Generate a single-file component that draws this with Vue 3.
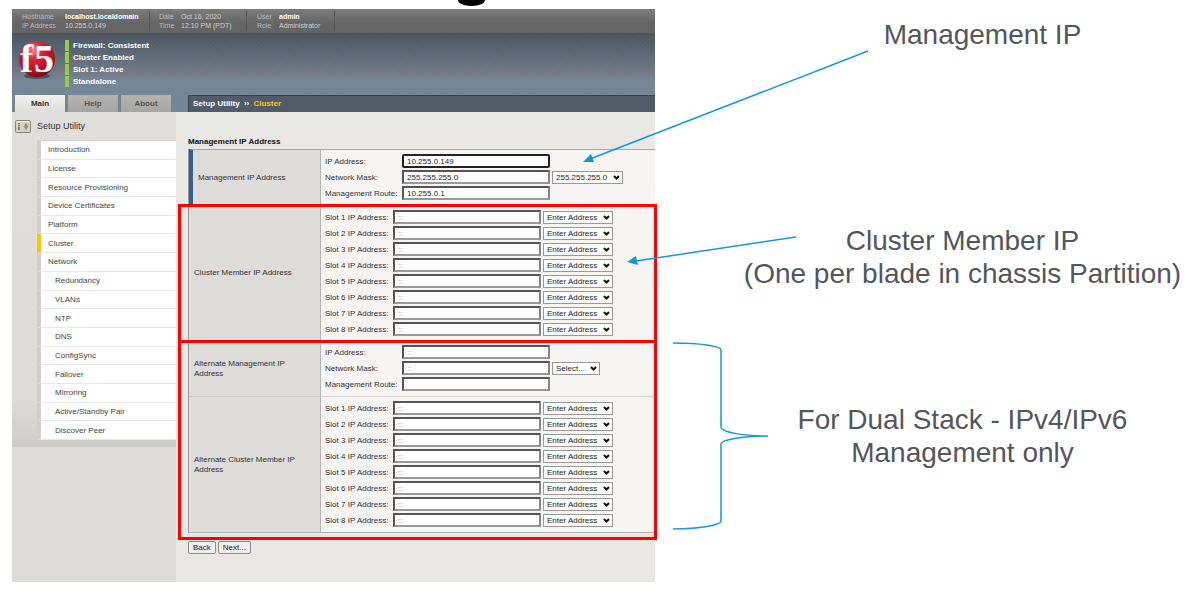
<script setup>
const hostInfo = [
  { cls: 'host', rows: [['Hostname', 'localhost.localdomain', true], ['IP Address', '10.255.0.149', false]] },
  { cls: 'time', rows: [['Date', 'Oct 16, 2020', false], ['Time', '12:10 PM (PDT)', false]] },
  { cls: 'user', rows: [['User', 'admin', true], ['Role', 'Administrator', false]] },
]

const statuses = ['Firewall: Consistent', 'Cluster Enabled', 'Slot 1: Active', 'Standalone']

const menu = [
  { label: 'Introduction' },
  { label: 'License' },
  { label: 'Resource Provisioning' },
  { label: 'Device Certificates' },
  { label: 'Platform' },
  { label: 'Cluster', active: true },
  { label: 'Network' },
  { label: 'Redundancy', sub: true },
  { label: 'VLANs', sub: true },
  { label: 'NTP', sub: true },
  { label: 'DNS', sub: true },
  { label: 'ConfigSync', sub: true },
  { label: 'Failover', sub: true },
  { label: 'Mirroring', sub: true },
  { label: 'Active/Standby Pair', sub: true },
  { label: 'Discover Peer', sub: true },
]

const slots = (prefix) =>
  Array.from({ length: 8 }, (_, i) => ({
    id: `${prefix}-slot-${i + 1}`,
    label: `Slot ${i + 1} IP Address:`,
    value: '::',
    select: 'Enter Address',
  }))

const groups = [
  {
    boxed: false,
    sections: [
      {
        title: 'Management IP Address',
        required: true,
        wide: true,
        fields: [
          { id: 'mgmt-ip', label: 'IP Address:', value: '10.255.0.149', focus: true },
          { id: 'mgmt-mask', label: 'Network Mask:', value: '255.255.255.0', select: '255.255.255.0' },
          { id: 'mgmt-route', label: 'Management Route:', value: '10.255.0.1' },
        ],
      },
    ],
  },
  {
    boxed: true,
    sections: [{ title: 'Cluster Member IP Address', fields: slots('member') }],
  },
  {
    boxed: true,
    last: true,
    sections: [
      {
        title: 'Alternate Management IP Address',
        wide: true,
        fields: [
          { id: 'alt-ip', label: 'IP Address:', value: '::' },
          { id: 'alt-mask', label: 'Network Mask:', value: '::', select: 'Select...' },
          { id: 'alt-route', label: 'Management Route:', value: '' },
        ],
      },
      { title: 'Alternate Cluster Member IP Address', fields: slots('alt-member') },
    ],
  },
]
</script>

<template>
  <div class="slide">
    <div class="slide-top"><span class="title-tail"></span></div>

    <div class="columns">
      <div class="console">
        <header class="info-bar">
          <dl v-for="g in hostInfo" :key="g.cls" :class="['info', g.cls]">
            <template v-for="r in g.rows" :key="r[0]">
              <dt>{{ r[0] }}</dt>
              <dd :class="{ strong: r[2] }">{{ r[1] }}</dd>
            </template>
          </dl>
        </header>

        <div class="banner">
          <svg class="logo" viewBox="0 0 38 38" role="img" aria-label="f5">
            <defs>
              <radialGradient id="ball" cx="40%" cy="25%" r="75%">
                <stop offset="0" stop-color="#f0848c" />
                <stop offset="0.35" stop-color="#d92435" />
                <stop offset="0.8" stop-color="#b50d22" />
                <stop offset="1" stop-color="#7d0a18" />
              </radialGradient>
            </defs>
            <ellipse cx="19" cy="35" rx="13" ry="3" fill="#2c3640" opacity="0.6" />
            <circle cx="19" cy="18" r="18" fill="url(#ball)" />
            <text x="2" y="31" class="logo-letter">f</text>
            <text x="16" y="31" class="logo-letter">5</text>
          </svg>
          <ul class="statuses">
            <li v-for="s in statuses" :key="s">{{ s }}</li>
          </ul>
        </div>

        <div class="tab-row">
          <nav class="tabs">
            <button type="button" class="tab current">Main</button>
            <button type="button" class="tab">Help</button>
            <button type="button" class="tab">About</button>
          </nav>
          <div class="crumbs">Setup Utility <span class="sep">››</span> <span class="here">Cluster</span></div>
        </div>

        <div class="body">
          <aside class="sidebar">
            <div class="side-panel">
              <h2 class="side-title">
                <svg class="switches" viewBox="0 0 16 13" aria-hidden="true">
                  <rect x="0.5" y="0.5" width="15" height="12" rx="1" fill="#d2d1cc" stroke="#85847f" />
                  <path d="M1.5 1.5h13" stroke="#f4f3f0" />
                  <path d="M4 3v7M11 3v7" stroke="#99988f" />
                  <path d="M3 3h2v3H3zM3 7h2v3H3z" fill="#85847a" />
                  <path d="M3 4h2v1H3z" fill="#d8bd45" />
                  <path d="M8.500 6.500l2.500-3 2.500 3-2.500 3z" fill="#a39b48" />
                </svg>
                Setup Utility
              </h2>
              <ul class="menu">
                <li v-for="m in menu" :key="m.label" :class="{ sub: m.sub, active: m.active }">
                  <a href="#">{{ m.label }}</a>
                </li>
              </ul>
            </div>
          </aside>

          <main class="content">
            <h1>Management IP Address</h1>
            <table class="form">
              <tbody v-for="(g, gi) in groups" :key="gi" :class="{ boxed: g.boxed, last: g.last }">
                <tr v-for="s in g.sections" :key="s.title">
                  <th scope="row" :class="{ required: s.required }">{{ s.title }}</th>
                  <td>
                    <div v-for="f in s.fields" :key="f.id" :class="['field', { wide: s.wide }]">
                      <label :for="f.id">{{ f.label }}</label>
                      <input :id="f.id" type="text" :value="f.value" :class="{ focus: f.focus, blank: f.value === '::' }" />
                      <span v-if="f.select" class="picker">
                        <select :aria-label="f.label + ' preset'">
                          <option>{{ f.select }}</option>
                        </select>
                        <svg viewBox="0 0 7 5" aria-hidden="true"><path d="M1 1l2.500 2.500L6 1" /></svg>
                      </span>
                    </div>
                  </td>
                </tr>
              </tbody>
            </table>
            <div class="actions">
              <button type="button">Back</button>
              <button type="button">Next...</button>
            </div>
          </main>
        </div>
      </div>

      <div class="notes">
        <p class="first">Management IP</p>
        <p class="second">Cluster Member IP<br />(One per blade in chassis Partition)</p>
        <p class="third">For Dual Stack - IPv4/IPv6<br />Management only</p>
      </div>
    </div>

    <svg class="pointers" viewBox="0 0 1198 597" preserveAspectRatio="none" aria-hidden="true">
      <path class="line" d="M868 51L590 159" />
      <path class="head" d="M583 162l8-8 3 8z" />
      <path class="line" d="M796 237L636 261" />
      <path class="head" d="M627 262l9-6 2 9z" />
      <path class="line" d="M673 343C700 343 721 346 721 350V427C721 432 742 436 768 436C742 436 721 440 721 444V521C721 525 700 529 673 529" />
    </svg>
  </div>
</template>

<style>
body {
  margin: 0;
  background: #fff;
}
</style>

<style scoped>
.slide {
  position: relative;
  min-height: 597px;
  font-family: "Liberation Sans", Arial, sans-serif;
  font-size: 8px;
  color: #333;
}
.slide * {
  box-sizing: border-box;
}
.slide-top {
  height: 9px;
  padding-left: 458px;
}
.title-tail {
  display: block;
  width: 27px;
  height: 6px;
  border-radius: 0 0 13px 13px / 0 0 6px 6px;
  background: #000;
}
.columns {
  display: grid;
  grid-template-columns: 643fr 543fr;
  padding-left: 12px;
}

/* console header */
.info-bar {
  display: flex;
  height: 26px;
  padding: 2px 0;
  background: linear-gradient(#7c7c7c, #656565 60%, #646464);
  border-bottom: 2px solid #505254;
}
.info {
  display: grid;
  align-content: center;
  margin: 0;
  border-right: 1px solid #555;
  font-size: 7px;
  line-height: 9px;
  color: #bdbdbd;
}
.info.host {
  grid-template-columns: 43px 84px;
  padding-left: 10px;
}
.info.time {
  grid-template-columns: 22px 65px;
  padding-left: 9px;
}
.info.user {
  grid-template-columns: 22px 55px;
  padding-left: 10px;
}
.info dd {
  margin: 0;
  color: #d0d0d0;
}
.info dd.strong {
  font-weight: 700;
  color: #fff;
}
.banner {
  display: flex;
  height: 60px;
  padding: 5px 0 0 6px;
  gap: 9px;
  background:
    repeating-linear-gradient(135deg, rgba(255, 255, 255, 0.02) 0 1px, transparent 1px 3px),
    linear-gradient(#4b5762, #5b6774 30%, #727c89 65%, #748596 75%, #748596);
}
.logo {
  width: 38px;
  height: 38px;
  margin-top: 1px;
  overflow: visible;
}
.logo-letter {
  font-family: "Liberation Serif", "Times New Roman", serif;
  font-size: 40px;
  font-weight: 700;
  fill: #fff;
}
.statuses {
  margin: 0;
  padding: 0;
  list-style: none;
  font-weight: 700;
  line-height: 11px;
  color: #fff;
}
.statuses li {
  margin-bottom: 1px;
  padding-left: 4px;
  border-left: 4px solid #97cc49;
}
.tab-row {
  display: grid;
  grid-template-columns: 176px 1fr;
  height: 17px;
  background: #748596;
}
.tabs {
  display: flex;
  gap: 3px;
  padding-left: 3px;
}
.tab {
  width: 50px;
  padding: 0;
  border: 0;
  background: linear-gradient(#b4b3af, #a5a4a0);
  font: 700 8px/17px "Liberation Sans", Arial, sans-serif;
  color: #55554f;
}
.tab.current {
  background: linear-gradient(#f2f1ee, #dedddA);
  color: #333;
}
.crumbs {
  padding-left: 4px;
  border-top: 1px solid #3d4650;
  border-left: 1px solid #3d4650;
  background: #515c69;
  font-weight: 700;
  line-height: 16px;
  color: #fff;
}
.crumbs .sep {
  padding: 0 2px;
}
.crumbs .here {
  color: #fdc500;
}

/* body */
.body {
  display: grid;
  grid-template-columns: 164px 1fr;
  min-height: 470px;
  background: #e9e8e4;
}
.sidebar {
  background: #dddcd8;
}
.side-panel {
  padding-bottom: 7px;
  background: linear-gradient(#dfdeda, #dddcd8 85%, #cdccc8);
}
.side-title {
  display: flex;
  align-items: center;
  gap: 6px;
  height: 28px;
  margin: 0;
  padding-left: 3px;
  font-size: 9px;
  font-weight: 400;
}
.switches {
  width: 16px;
  height: 13px;
}
.menu {
  display: grid;
  grid-auto-rows: 1fr;
  height: 300px;
  margin: 0 0 0 25px;
  padding: 0;
  list-style: none;
  border-top: 1px solid #cfceca;
}
.menu li {
  display: flex;
  align-items: center;
  padding-left: 7px;
  border-left: 4px solid #cfceca;
  border-bottom: 1px solid #e8e7e4;
  background: #fff;
}
.menu li.sub {
  padding-left: 14px;
}
.menu li.active {
  border-left-color: #fdc500;
}
.menu a {
  color: #444;
  text-decoration: none;
}
.content {
  padding: 25px 0 0 12px;
}
h1 {
  margin: 0;
  font-size: 8px;
  line-height: 10px;
  color: #111;
}
.form {
  width: 100%;
  margin-top: 2px;
  border-collapse: separate;
  border-spacing: 0;
  border-left: 1px solid #999;
}
tbody {
  position: relative;
}
tbody.boxed::after {
  content: "";
  position: absolute;
  inset: -1px -2px -3px -11px;
  border: 3px solid #f00;
  pointer-events: none;
}
tbody.boxed.last::after {
  top: 0;
  bottom: -7px;
}
th {
  width: 132px;
  padding: 0 8px 0 5px;
  border-right: 1px solid #b5b4b0;
  border-top: 1px solid #cccbc7;
  background: #dddcd8;
  font-weight: 400;
  line-height: 10px;
  text-align: left;
}
th.required {
  border-left: 4px solid #2f6398;
}
td {
  padding: 3px 4px 4px;
  border-top: 1px solid #d5d4d1;
  background: #f6f5f4;
}
tbody.boxed:not(.last) td {
  padding-bottom: 3px;
}
tbody:last-child tr:last-child > * {
  border-bottom: 1px solid #b5b4b0;
}
tbody:first-child tr > * {
  border-top-color: #aaa;
}
.field {
  display: flex;
  align-items: center;
  gap: 2px;
  height: 16px;
}
.field label {
  width: 66px;
  white-space: nowrap;
}
.field.wide label {
  width: 75px;
}
input {
  width: 148px;
  height: 14px;
  padding: 0 3px;
  border: 2px solid;
  border-color: #555 #858585 #999 #555;
  background: #fff;
  font: 8px "Liberation Sans", Arial, sans-serif;
  color: #222;
}
input.blank {
  color: #8a8078;
}
input.focus {
  border-color: #222;
  border-radius: 2px;
}
.picker {
  position: relative;
}
.picker select {
  display: block;
  height: 13px;
  padding: 0 14px 0 3px;
  border: 1px solid #999;
  border-radius: 0;
  background: #fff;
  appearance: none;
  font: 8px "Liberation Sans", Arial, sans-serif;
  color: #222;
}
.picker svg {
  position: absolute;
  right: 3px;
  top: 4px;
  width: 7px;
  height: 5px;
  fill: none;
  stroke: #111;
  stroke-width: 2;
  pointer-events: none;
}
.actions {
  display: flex;
  gap: 2px;
  margin-top: 8px;
}
.actions button {
  height: 13px;
  padding: 0 4px;
  border: 1px solid #8c8c8c;
  border-radius: 2px;
  background: #efefef;
  font: 8px/11px "Liberation Sans", Arial, sans-serif;
  color: #222;
}

/* annotations */
.notes {
  padding: 9px 0 0 72px;
  font-size: 28px;
  line-height: 33px;
  text-align: center;
  color: #53565a;
}
.notes p {
  margin: 0;
  white-space: nowrap;
}
.notes .first {
  padding-left: 40px;
}
.notes .second {
  margin-top: 173px;
}
.notes .third {
  margin-top: 113px;
}
.pointers {
  position: absolute;
  top: 0;
  left: 0;
  width: 100%;
  height: 597px;
  pointer-events: none;
}
.pointers .line {
  fill: none;
  stroke: #1598d6;
  stroke-width: 1.5;
}
.pointers .head {
  fill: #1598d6;
}
</style>
